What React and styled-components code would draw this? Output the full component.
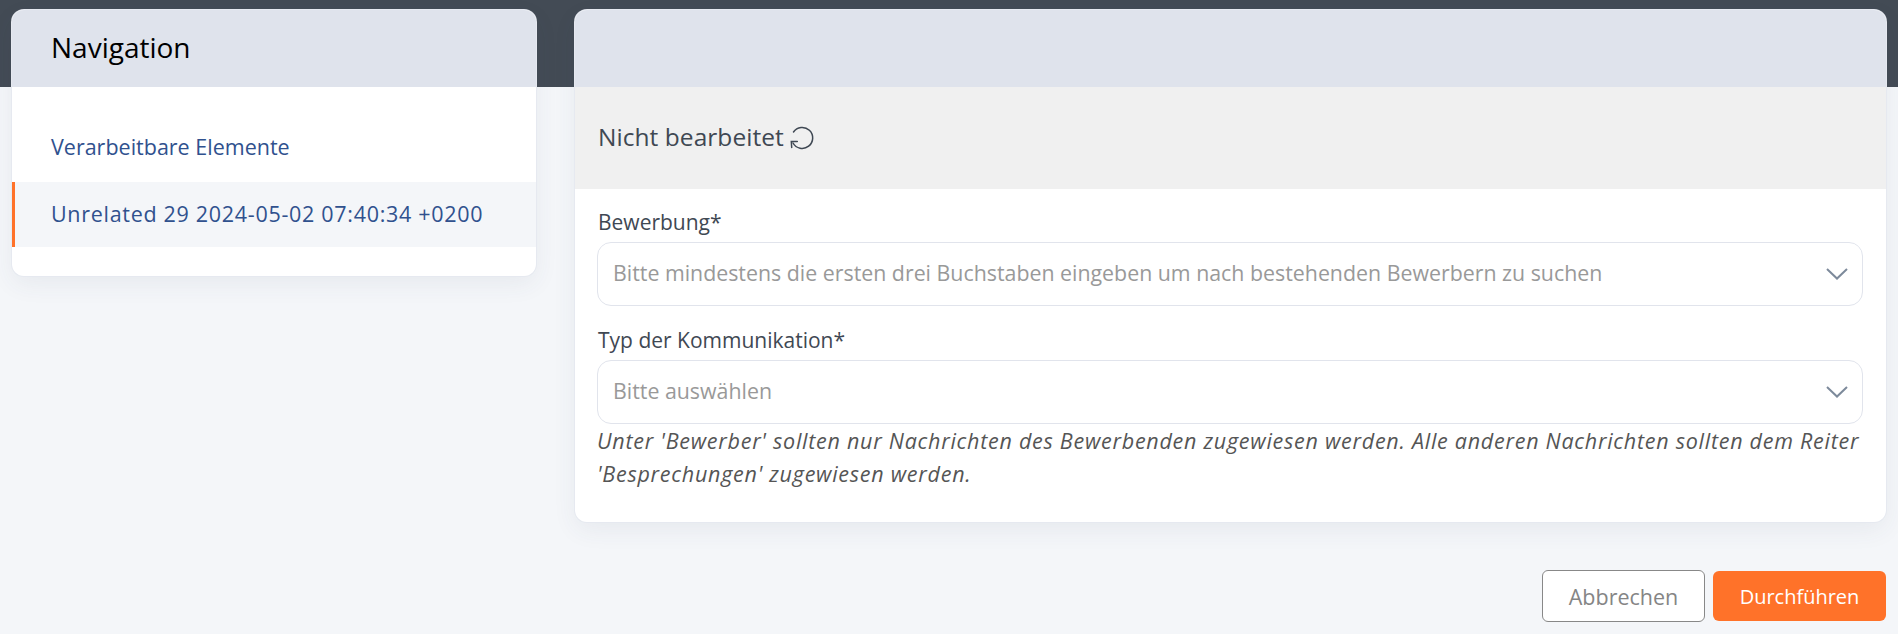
import React from "react";
import styled, { createGlobalStyle } from "styled-components";

const Global = createGlobalStyle`
  html, body { margin: 0; padding: 0; }
  body { font-family: "Open Sans", "Noto Sans", sans-serif; background: #f4f6f9; }
`;

const Page = styled.div`
  width: 1898px;
  height: 634px;
  box-sizing: border-box;
  overflow: hidden;
  padding: 10px 12px 0 12px;
  background: linear-gradient(#434b55 0, #434b55 87px, #f4f6f9 87px);
`;
const Columns = styled.div`
  display: grid;
  grid-template-columns: 524px 1311px;
  column-gap: 39px;
  align-items: start;
`;
const Card = styled.section`
  background: #fff;
  border-radius: 12px;
  box-shadow: 0 0 0 1px #e6e9f0, 0 8px 24px rgba(60, 75, 100, 0.07);
  overflow: hidden;
`;
const CardHeader = styled.header`
  height: 77px;
  background: #dfe3ec;
  display: flex;
  align-items: center;
  padding: 0 0 4px 39px;
  box-sizing: border-box;
  font-size: 28px;
  color: #000;
`;
const NavList = styled.nav`
  padding: 30px 0 29px;
`;
const NavItem = styled.div`
  height: 65px;
  box-sizing: border-box;
  display: flex;
  align-items: center;
  padding-left: ${(p) => (p.$active ? 36 : 39)}px;
  padding-bottom: ${(p) => (p.$active ? 2 : 6)}px;
  font-size: 21.5px;
  letter-spacing: ${(p) => (p.$active ? 0.7 : 0)}px;
  color: #30518e;
  background: ${(p) => (p.$active ? "#f4f6f9" : "transparent")};
  border-left: ${(p) => (p.$active ? "3px solid #ff7229" : "none")};
`;
const StatusBar = styled.div`
  height: 102px;
  box-sizing: border-box;
  background: #f0f0f0;
  display: flex;
  align-items: center;
  padding: 0 23px 4px;
  gap: 6px;
  font-size: 24.5px;
  letter-spacing: 0.05px;
  color: #3f4853;
`;
const Form = styled.div`
  padding: 16px 23px 32px 22px;
`;
const Label = styled.label`
  display: block;
  font-size: 21px;
  line-height: 34px;
  padding: 0 0 3px 1px;
  color: #3f4853;
`;
const Select = styled.div`
  height: 64px;
  box-sizing: border-box;
  border: 1px solid #e1e4ec;
  border-radius: 14px;
  display: flex;
  align-items: center;
  justify-content: space-between;
  padding: 0 14px 3px 15px;
  font-size: 21.35px;
  color: #999;
  margin-bottom: ${(p) => p.$gap || 0}px;
`;
const Hint = styled.p`
  margin: 0;
  font-size: 21.5px;
  line-height: 33px;
  font-style: italic;
  letter-spacing: 0.74px;
  color: #555;
`;
const Actions = styled.div`
  display: flex;
  justify-content: flex-end;
  align-items: center;
  gap: 8px;
  margin-top: 48px;
`;
const Button = styled.button`
  box-sizing: border-box;
  width: ${(p) => (p.$primary ? 173 : 163)}px;
  height: ${(p) => (p.$primary ? 50 : 52)}px;
  border-radius: 6px;
  border: ${(p) => (p.$primary ? "none" : "1px solid #888")};
  background: ${(p) => (p.$primary ? "#ff7229" : "#fff")};
  color: ${(p) => (p.$primary ? "#fff" : "#858585")};
  font-family: inherit;
  font-size: ${(p) => (p.$primary ? 20 : 21.5)}px;
  padding: 0;
`;

const Chevron = () => (
  <svg width="22" height="12" viewBox="0 0 22 12" fill="none" stroke="#7d8a9b" strokeWidth="2" style={{ marginTop: 3 }}>
    <path d="M1 1 L11 10.5 L21 1" />
  </svg>
);
const Reload = () => (
  <svg width="24" height="24" viewBox="0 0 24 24" fill="none" stroke="#3f4853" strokeWidth="1.5" strokeLinecap="round" style={{ marginTop: 3 }}>
    <path d="M3.5 6 A10.5 10.5 0 1 1 3 17" />
    <path d="M1.7 21.5 L1.3 15.5 L7.3 15.5" />
  </svg>
);

export default function App() {
  return (
    <>
      <Global />
      <Page>
        <Columns>
          <Card>
            <CardHeader>Navigation</CardHeader>
            <NavList>
              <NavItem>Verarbeitbare Elemente</NavItem>
              <NavItem $active>Unrelated 29 2024-05-02 07:40:34 +0200</NavItem>
            </NavList>
          </Card>
          <div>
            <Card>
              <CardHeader />
              <StatusBar>Nicht bearbeitet <Reload /></StatusBar>
              <Form>
                <Label>Bewerbung*</Label>
                <Select $gap={17}>
                  Bitte mindestens die ersten drei Buchstaben eingeben um nach bestehenden Bewerbern zu suchen
                  <Chevron />
                </Select>
                <Label>Typ der Kommunikation*</Label>
                <Select>
                  Bitte auswählen
                  <Chevron />
                </Select>
                <Hint>
                  Unter 'Bewerber' sollten nur Nachrichten des Bewerbenden zugewiesen werden. Alle anderen Nachrichten sollten dem Reiter 'Besprechungen' zugewiesen werden.
                </Hint>
              </Form>
            </Card>
            <Actions>
              <Button>Abbrechen</Button>
              <Button $primary>Durchführen</Button>
            </Actions>
          </div>
        </Columns>
      </Page>
    </>
  );
}
